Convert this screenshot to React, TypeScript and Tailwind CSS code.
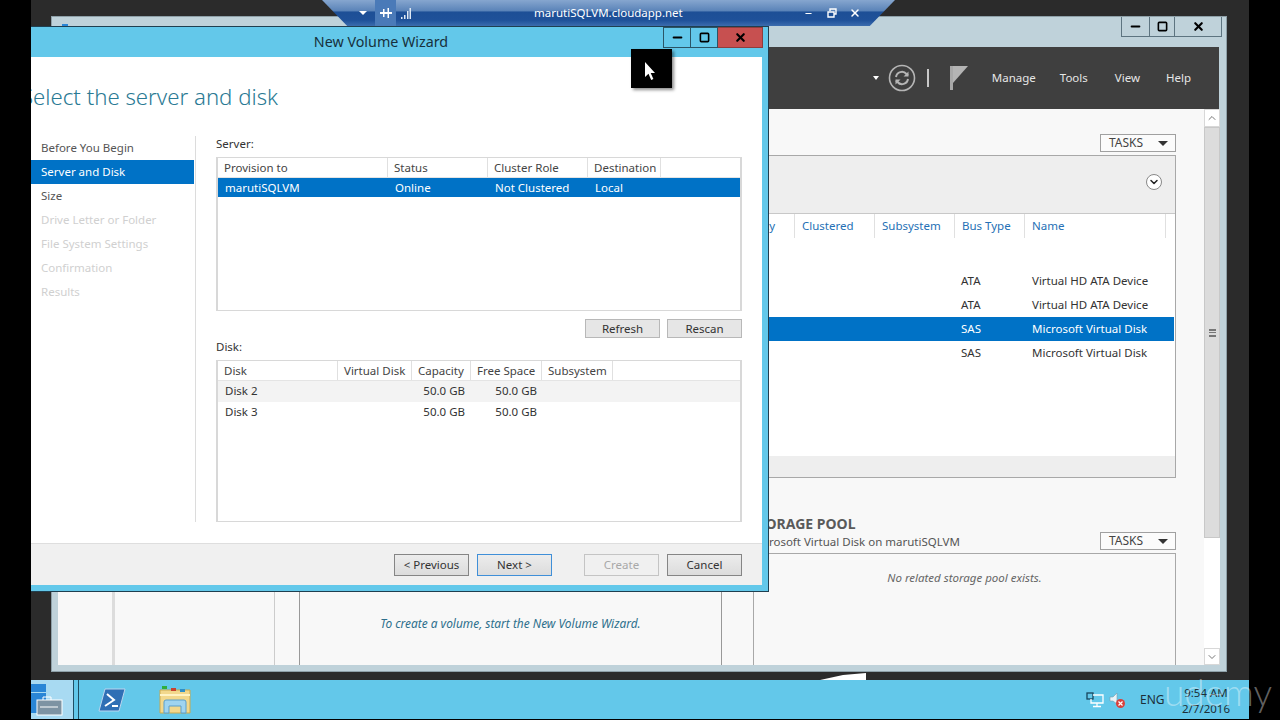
import React from "react";
import { ChevronDown, ChevronUp, Minus, Square, X } from "lucide-react";

const serverCols = [
  { label: "Provision to", width: "w-[170px]" },
  { label: "Status", width: "w-[100px]" },
  { label: "Cluster Role", width: "w-[100px]" },
  { label: "Destination", width: "w-[73px]" },
];

const diskCols = [
  { label: "Disk", width: "w-[120px]" },
  { label: "Virtual Disk", width: "w-[74px]" },
  { label: "Capacity", width: "w-[59px]" },
  { label: "Free Space", width: "w-[71px]" },
  { label: "Subsystem", width: "w-[71px]" },
];

const steps = ["Before You Begin", "Server and Disk", "Size", "Drive Letter or Folder", "File System Settings", "Confirmation", "Results"];

const disks = [
  { name: "Disk 2", active: true },
  { name: "Disk 3", active: false },
];

const physicalDisks = [
  { bus: "ATA", name: "Virtual HD ATA Device", selected: false },
  { bus: "ATA", name: "Virtual HD ATA Device", selected: false },
  { bus: "SAS", name: "Microsoft Virtual Disk", selected: true },
  { bus: "SAS", name: "Microsoft Virtual Disk", selected: false },
];

function WizardButton({ label, tone }: { label: string; tone?: "focus" | "off" }) {
  const look =
    tone === "focus"
      ? "border-[#3f8fd8] text-[#333] bg-[linear-gradient(#ececec,#dcdcdc)]"
      : tone === "off"
        ? "border-[#c4c4c4] text-[#a8a8a8] bg-[#f0f0f0]"
        : "border-[#858585] text-[#333] bg-[linear-gradient(#ececec,#dcdcdc)]";
  return <div className={`w-[75px] h-[22px] border flex items-center justify-center ${look}`}>{label}</div>;
}

function Tasks() {
  return (
    <div className="w-[76px] h-[18px] border border-[#a0a0a0] bg-[#fbfbfb] flex items-center justify-between pl-[8px] pr-[7px] text-[12px] text-[#444]">
      <span>TASKS</span>
      <span className="w-0 h-0 border-x-[5px] border-x-transparent border-t-[5px] border-t-[#333]" />
    </div>
  );
}

function ListHeader({ cols, h }: { cols: { label: string; width: string }[]; h: string }) {
  return (
    <div className={`flex ${h} border-b border-[#e4e4e4] text-[#444]`}>
      {cols.map((c) => (
        <div key={c.label} className={`${c.width} pl-[6px] border-r border-[#e0e0e0] flex items-center`}>
          {c.label}
        </div>
      ))}
    </div>
  );
}

function Wizard() {
  return (
    <div className="absolute left-[-38px] top-[26px] w-[776px] h-[566px] bg-[#63c8ea] border-t border-r border-b border-[#1f3f50] pl-[7px] pr-[6px] pb-[6px] flex flex-col">
      <div className="h-[30px] pb-[1px] relative flex items-center justify-center text-[14.3px] text-[#17303c]">
        New Volume Wizard
        <div className="absolute right-[-1px] top-0 h-[21px] flex">
          <div className="w-[28px] border border-[#2b5566] flex items-center justify-center"><Minus size={13} strokeWidth={4} className="text-black" /></div>
          <div className="w-[27px] border-y border-r border-[#2b5566] flex items-center justify-center"><Square size={11} strokeWidth={3.5} className="text-black" /></div>
          <div className="w-[45px] bg-[#c75050] border-y border-r border-[#8f3d3d] flex items-center justify-center"><X size={13} strokeWidth={4} className="text-black" /></div>
        </div>
      </div>
      <div className="flex-1 bg-white flex flex-col min-h-0">
        <div className="h-[79px] pl-[21px] pt-[25px] text-[22.2px] leading-[30px] font-light text-[#2a7a94] shrink-0">Select the server and disk</div>
        <div className="h-[386px] flex shrink-0">
          <div className="w-[196px] border-r border-[#dcdcdc] text-[#555]">
            {steps.map((s, i) => (
              <div
                key={s}
                className={`h-[24px] pl-[41px] flex items-center ${i === 1 ? "bg-[#0072c6] text-white mr-[1px]" : i > 2 ? "text-[#d0d0d0]" : "text-[#555]"}`}
              >
                {s}
              </div>
            ))}
          </div>
          <div className="w-[526px] ml-[20px] flex flex-col text-[#333]">
            <div className="h-[21px] leading-[16px]">Server:</div>
            <div className="h-[154px] border-2 border-[#d8d8d8] border-t-1 border-b-1">
              <ListHeader cols={serverCols} h="h-[20px]" />
              <div className="h-[19px] bg-[#0072c6] text-white flex items-center">
                <div className="w-[170px] pl-[7px]">marutiSQLVM</div>
                <div className="w-[100px] pl-[7px]">Online</div>
                <div className="w-[100px] pl-[7px]">Not Clustered</div>
                <div className="pl-[7px]">Local</div>
              </div>
            </div>
            <div className="flex justify-end gap-[7px] mt-[8px]">
              <div className="w-[75px] h-[19px] border border-[#b8b8b8] bg-[#e6e6e6] flex items-center justify-center">Refresh</div>
              <div className="w-[75px] h-[19px] border border-[#b8b8b8] bg-[#e6e6e6] flex items-center justify-center">Rescan</div>
            </div>
            <div className="h-[22px] pt-[1px] leading-[16px]">Disk:</div>
            <div className="flex-1 border-2 border-[#d8d8d8] border-t-1 border-b-1">
              <ListHeader cols={diskCols} h="h-[20px]" />
              {disks.map((d) => (
                <div key={d.name} className={`h-[21px] pb-[1px] flex items-center ${d.active ? "bg-[#f3f3f3]" : ""}`}>
                  <div className="w-[120px] pl-[7px]">{d.name}</div>
                  <div className="w-[127px] text-right">50.0 GB</div>
                  <div className="w-[72px] text-right">50.0 GB</div>
                </div>
              ))}
            </div>
          </div>
        </div>
        <div className="flex-1 mt-[21px] bg-[#f0f0f0] border-t border-[#dedede] flex items-start justify-end pt-[10px] pr-[20px] gap-[8px]">
          <WizardButton label="< Previous" />
          <div className="mr-[24px]"><WizardButton label="Next >" tone="focus" /></div>
          <WizardButton label="Create" tone="off" />
          <WizardButton label="Cancel" />
        </div>
      </div>
    </div>
  );
}

function ServerManager() {
  return (
    <div className="absolute left-[20px] top-[16px] w-[1176px] h-[656px] bg-[#bfd2da] border border-[#8ea0a8] flex flex-col pl-[6px] pr-[6px] pb-[6px]">
      <div className="h-[30px] flex justify-end shrink-0">
        <div className="h-[20px] -mr-[2px] flex border-x border-b border-[#5d7480] text-black">
          <div className="w-[28px] flex items-center justify-center border-r border-[#5d7480]"><Minus size={13} strokeWidth={4} /></div>
          <div className="w-[25px] flex items-center justify-center border-r border-[#5d7480]"><Square size={11} strokeWidth={3.5} /></div>
          <div className="w-[46px] flex items-center justify-center"><X size={13} strokeWidth={4} /></div>
        </div>
      </div>
      <div className="h-[62px] shrink-0 bg-[#3f3f3f] flex items-center justify-end pr-[28px] text-[11.5px] text-[#e6e6e6] mr-[1px]">
        <span className="w-0 h-0 border-x-[3px] border-x-transparent border-t-[4px] border-t-white mr-[9px]" />
        <svg width="28" height="28" viewBox="0 0 28 28" fill="none" className="mr-[11px]">
          <circle cx="14" cy="14" r="12.5" stroke="#b5b5b5" strokeWidth="1.6" />
          <path d="M8 13a6 6 0 0 1 10.5-3l1.5 1.5" stroke="#b5b5b5" strokeWidth="2" />
          <path d="M20 15a6 6 0 0 1-10.5 3L8 16.5" stroke="#b5b5b5" strokeWidth="2" />
          <path d="M20.5 7.5v5h-5zM7.5 20.5v-5h5z" fill="#b5b5b5" />
        </svg>
        <span className="w-[2px] h-[18px] bg-[#c8c8c8] mr-[21px]" />
        <svg width="18" height="24" viewBox="0 0 18 24" className="mr-[24px]">
          <rect x="0" y="0" width="3" height="24" fill="#a8a8a8" />
          <path d="M3 0h15l-15 17z" fill="#b4b4b4" />
        </svg>
        <span className="mr-[24px]">Manage</span>
        <span className="mr-[27px]">Tools</span>
        <span className="mr-[26px]">View</span>
        <span>Help</span>
      </div>
      <div className="flex-1 min-h-0 bg-[#f8f8f8] flex">
        <div className="w-[57px] border-r-[3px] border-[#dcdcdc] shrink-0" />
        <div className="w-[160px] border-r border-[#cccccc] shrink-0" />
        <div className="w-[25px] border-r border-[#999999] shrink-0" />
        <div className="w-[422px] border-r border-[#999999] shrink-0 flex items-end justify-center pb-[32px] italic text-[11.9px] text-[#2d6f8c]">
          To create a volume, start the New Volume Wizard.
        </div>
        <div className="w-[31px] shrink-0" />
        <div className="w-[423px] shrink-0 flex flex-col">
          <div className="h-[25px] shrink-0" />
          <div className="flex justify-end shrink-0"><Tasks /></div>
          <div className="mt-[3px] h-[323px] shrink-0 border border-[#a8a8a8] flex flex-col bg-[#eeeeee]">
            <div className="h-[57px] flex items-start justify-end pr-[13px] pt-[18px] shrink-0">
              <div className="w-[16px] h-[16px] rounded-full border border-[#888] bg-white flex items-center justify-center">
                <ChevronDown size={12} strokeWidth={3} className="text-[#222]" />
              </div>
            </div>
            <div className="h-[243px] bg-white border-t border-[#c8c8c8] shrink-0 text-[#333]">
              <div className="h-[24px] flex text-[#2570b5]">
                <div className="w-[41px] flex justify-end pr-[19px] items-center whitespace-nowrap border-r border-[#e0e0e0]">Capacity</div>
                <div className="w-[80px] pl-[7px] flex items-center border-r border-[#e0e0e0]">Clustered</div>
                <div className="w-[80px] pl-[7px] flex items-center border-r border-[#e0e0e0]">Subsystem</div>
                <div className="w-[70px] pl-[7px] flex items-center border-r border-[#e0e0e0]">Bus Type</div>
                <div className="w-[141px] pl-[7px] flex items-center border-r border-[#e0e0e0]">Name</div>
              </div>
              <div className="h-[31px]" />
              {physicalDisks.map((d, i) => (
                <div key={i} className={`h-[24px] flex items-center ${d.selected ? "bg-[#0072c6] text-white mr-[1px]" : ""}`}>
                  <div className="w-[207px] shrink-0" />
                  <div className="w-[71px] shrink-0">{d.bus}</div>
                  <div>{d.name}</div>
                </div>
              ))}
            </div>
            <div className="flex-1" />
          </div>
          <div className="h-[40px] mt-[32px] shrink-0 flex items-end justify-between">
            <div className="whitespace-nowrap -ml-[3px]">
              <div className="text-[14px] leading-[18px] font-bold text-[#5a5a5a]">STORAGE POOL</div>
              <div className="leading-[17px] text-[#555]">Microsoft Virtual Disk on marutiSQLVM</div>
            </div>
            <Tasks />
          </div>
          <div className="flex-1 mt-[3px] border-x border-t border-[#a8a8a8] flex justify-center pt-[15px] italic text-[#666]">
            No related storage pool exists.
          </div>
        </div>
        <div className="w-[28px] shrink-0" />
        <div className="w-[16px] shrink-0 bg-white flex flex-col text-[#777]">
          <div className="h-[18px] flex items-center justify-center border border-[#d8d8d8]"><ChevronUp size={12} /></div>
          <div className="h-[411px] bg-[#dcdcdc] border border-[#c8c8c8] flex items-center justify-center">
            <div className="w-[7px] h-[8px] border-y-2 border-[#777] flex items-center"><div className="w-full h-[1px] bg-[#777]" /></div>
          </div>
          <div className="flex-1" />
          <div className="h-[17px] flex items-center justify-center border border-[#d8d8d8]"><ChevronDown size={12} /></div>
        </div>
      </div>
    </div>
  );
}

function RemoteBar() {
  return (
    <div className="absolute left-[291px] top-0 w-[573px] h-[26px] [clip-path:polygon(0_0,100%_0,95.6%_100%,4.4%_100%)] bg-[linear-gradient(#86a6cf_0%,#5a83b8_42%,#1d4f96_46%,#1f5199_78%,#3b6cae_100%)] flex items-center text-white">
      <span className="ml-[37px] w-0 h-0 border-x-[4px] border-x-transparent border-t-[4px] border-t-white" />
      <div className="ml-[8px] w-[21px] h-[26px] bg-[#4a7ab8] flex items-center justify-center">
        <svg width="12" height="10" viewBox="0 0 12 10" fill="white"><path d="M0 4h3V1h1.5v3h3V0H9v4h3v2H9v4H7.5V6h-3v3H3V6H0z" /></svg>
      </div>
      <svg width="10" height="11" viewBox="0 0 10 11" fill="#dfe8f3" className="ml-[5px]">
        <path d="M0 9h1.5v2H0zM3 7h1.5v4H3zM6 3h1.5v8H6zM8.5 0H10v11H8.5z" />
      </svg>
      <span className="ml-[123px] w-[146px] text-center">marutiSQLVM.cloudapp.net</span>
      <Minus size={9} strokeWidth={3} className="ml-[124px]" />
      <svg width="10" height="10" viewBox="0 0 10 10" fill="none" stroke="white" strokeWidth="1.4" className="ml-[14px]">
        <path d="M3 3V1h6v5H7M1 4h6v5H1z" />
      </svg>
      <X size={12} strokeWidth={3} className="ml-[12px]" />
    </div>
  );
}

function Cursor() {
  return (
    <div className="absolute left-[600px] top-[49px] w-[41px] h-[39px] bg-black shadow-[2px_2px_3px_rgba(0,0,0,0.45)]">
      <svg width="12" height="20" viewBox="0 0 12 20" className="absolute left-[13px] top-[13px]">
        <path d="M1 0v15l3.5-3.2 2.7 6.2 2.2-1-2.7-6H11z" fill="white" />
      </svg>
    </div>
  );
}

function Taskbar() {
  return (
    <div className="h-[39px] shrink-0 bg-[#63c8ea] flex items-center relative">
      <div className="w-[43px] h-full bg-[#a8daf2] border-r border-[#1f4f64] relative shrink-0">
        <svg width="32" height="32" viewBox="0 0 32 32" className="absolute left-0 top-[4px]">
          <rect x="0" y="0" width="15" height="8" fill="#2a86d6" />
          <rect x="0" y="9" width="15" height="20" fill="#2a86d6" />
          <rect x="6" y="16" width="25" height="15" fill="#7d93a3" stroke="white" />
          <path d="M12 16v-3h8v3M9 23h18" stroke="white" fill="none" />
        </svg>
      </div>
      <div className="w-[5px] h-full border-r border-[#1f4f64] shrink-0" />
      <svg width="28" height="24" viewBox="0 0 28 24" className="ml-[19px] shrink-0">
        <path d="M7 1h20l-6 22H1z" fill="#2f6fb5" stroke="#bcd5ee" />
        <path d="M9 6l7 6-9 6M14 18h6" stroke="white" strokeWidth="2" fill="none" />
      </svg>
      <svg width="32" height="30" viewBox="0 0 32 30" className="ml-[33px] shrink-0">
        <path d="M1 5h30v23H1z" fill="#f2d88c" stroke="#c9a94f" />
        <path d="M1 10h30" stroke="#fff3c4" strokeWidth="2" />
        <rect x="3" y="1" width="5" height="3" fill="#2fae3e" />
        <rect x="12" y="3" width="5" height="3" fill="#c8422f" />
        <rect x="21" y="4" width="5" height="3" fill="#2f8fc8" />
        <path d="M5 28V17q0-2 2-2h18q2 0 2 2v11h-5v-7H10v7z" fill="#9fd4f0" stroke="#5b9fcb" />
      </svg>
      <div className="ml-auto flex items-center text-[#1c2f38]">
        <svg width="18" height="16" viewBox="0 0 18 16" fill="none" stroke="white" strokeWidth="1.3">
          <rect x="1" y="1" width="6" height="6" stroke="#17465c" />
          <path d="M7 3h10v8H5V7M11 11v3M7 14.5h8" />
        </svg>
        <svg width="16" height="16" viewBox="0 0 16 16" className="ml-[5px]">
          <path d="M1 5h3l4-4v11L4 9H1z" fill="#e8f4fa" stroke="#7b9aa8" strokeWidth="0.6" />
          <circle cx="11.5" cy="11.5" r="4.5" fill="#d8403c" />
          <path d="M9.5 9.5l4 4M13.5 9.5l-4 4" stroke="white" strokeWidth="1.2" />
        </svg>
        <span className="ml-[15px] w-[37px] text-[12px]">ENG</span>
        <div className="w-[72px] text-center pr-[14px] pt-[2px] leading-[16px] whitespace-nowrap">
          <div>9:54 AM</div>
          <div>2/7/2016</div>
        </div>
      </div>
    </div>
  );
}

export default function App() {
  return (
    <div className="w-[1280px] h-[720px] bg-black flex font-['Noto_Sans',sans-serif] text-[11.5px] overflow-hidden relative">
      <div className="w-[31px] shrink-0" />
      <div className="w-[1218px] shrink-0 h-[719px] flex flex-col">
        <div className="flex-1 bg-[#2b2b2b] relative overflow-hidden">
          <ServerManager />
          <div className="absolute left-[789px] top-[673px] w-[46px] h-[7px] bg-white [clip-path:polygon(0_100%,50%_30%,100%_0,100%_100%)]" />
          <div className="absolute left-[31px] top-[24px] w-[6px] h-[2px] bg-[#2a86d6]" />
          <RemoteBar />
          <Wizard />
          <Cursor />
        </div>
        <Taskbar />
      </div>
      <div className="absolute left-[1164px] top-[668px] text-[37px] leading-[48px] font-['Lato',sans-serif] font-light text-white/40">udemy</div>
    </div>
  );
}
